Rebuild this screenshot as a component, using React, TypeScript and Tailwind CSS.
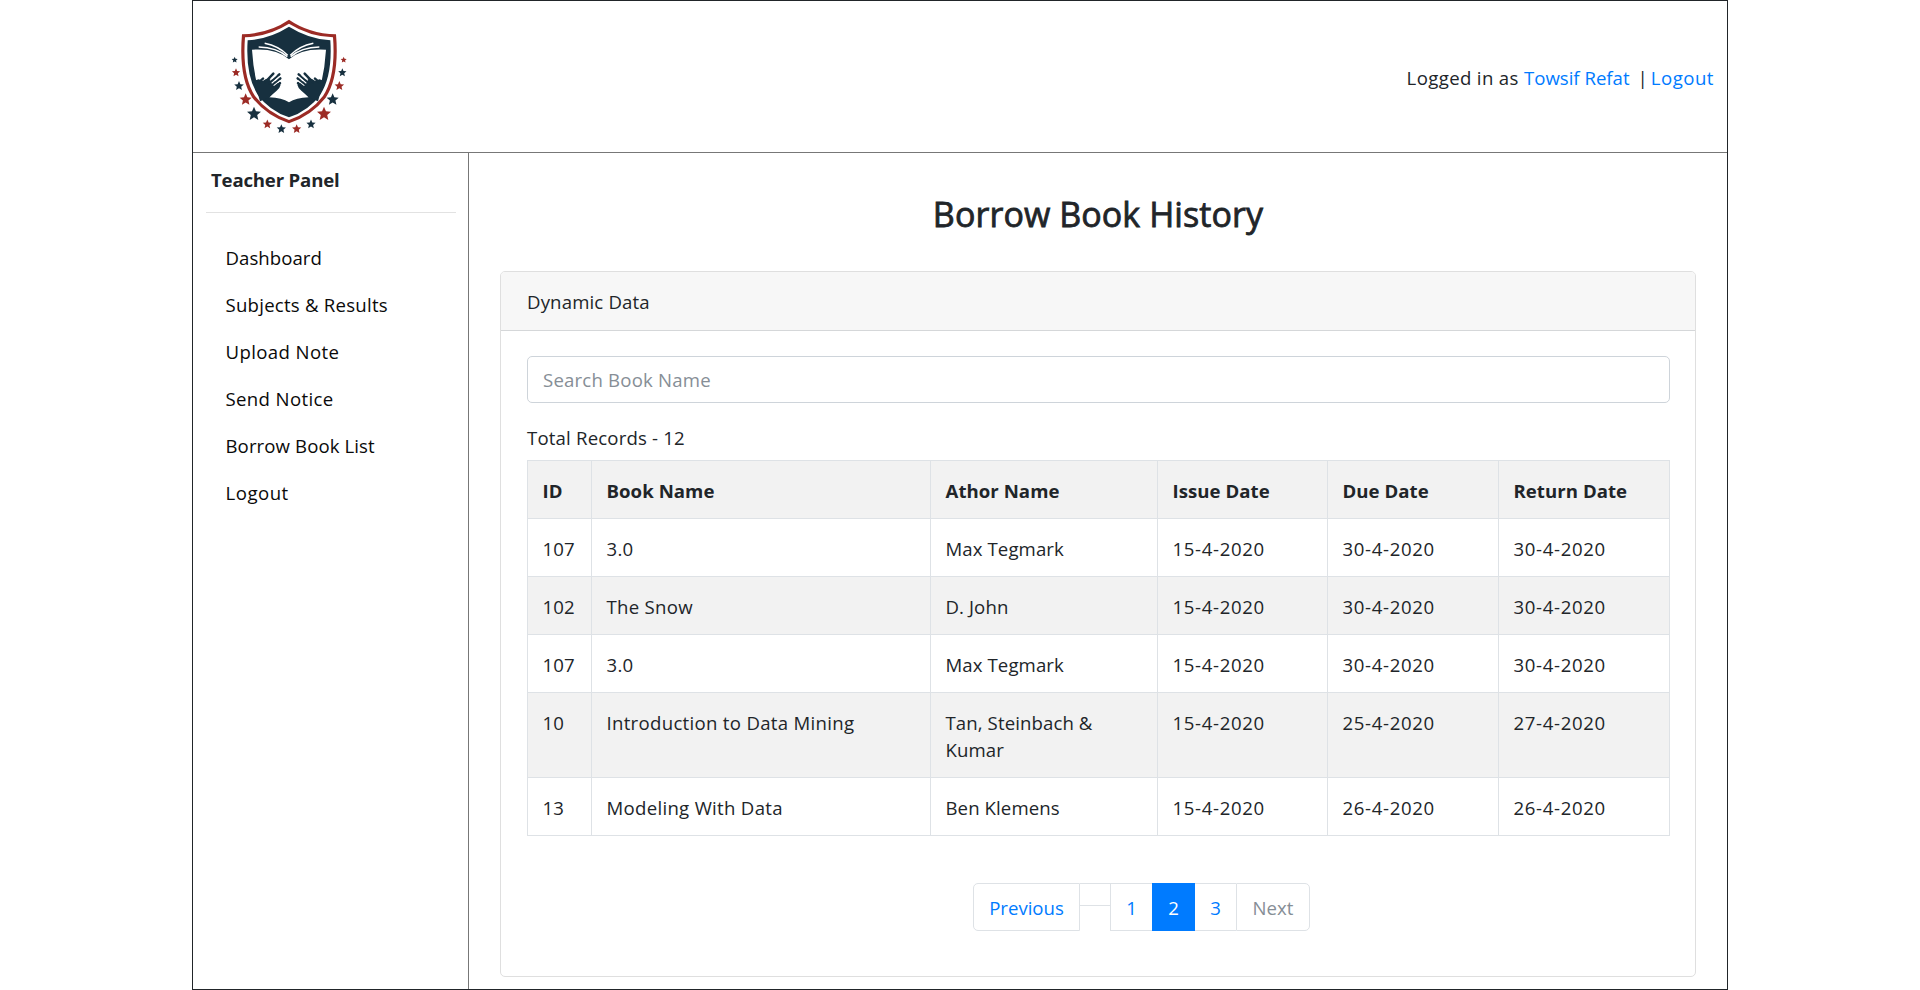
const NAVY = "#17303f";
const RED = "#9c2b25";

const menu: [string, string][] = [
  ["Dashboard", "tracking-[0.05px]"],
  ["Subjects & Results", "tracking-[0.24px]"],
  ["Upload Note", "tracking-[0.38px]"],
  ["Send Notice", "tracking-[0.36px]"],
  ["Borrow Book List", "tracking-[0.1px]"],
  ["Logout", "tracking-[0.5px]"],
];

const headings = ["ID", "Book Name", "Athor Name", "Issue Date", "Due Date", "Return Date"];

const rows = [
  ["107", "3.0", "Max Tegmark", "15-4-2020", "30-4-2020", "30-4-2020"],
  ["102", "The Snow", "D. John", "15-4-2020", "30-4-2020", "30-4-2020"],
  ["107", "3.0", "Max Tegmark", "15-4-2020", "30-4-2020", "30-4-2020"],
  ["10", "Introduction to Data Mining", "Tan, Steinbach & Kumar", "15-4-2020", "25-4-2020", "27-4-2020"],
  ["13", "Modeling With Data", "Ben Klemens", "15-4-2020", "26-4-2020", "26-4-2020"],
];

const cellTracking = [
  "tracking-[0.1px]",
  "tracking-[0.3px]",
  "tracking-[0.1px]",
  "tracking-[0.66px]",
  "tracking-[0.66px]",
  "tracking-[0.66px]",
];

// Centre x, centre y, radius, colour
const stars: [number, number, number, string][] = [
  [164, 180, 9.5, NAVY],
  [168, 218, 13, RED],
  [177, 258, 15, NAVY],
  [197, 299, 19, RED],
  [222, 342, 22, NAVY],
  [262, 373, 14.5, RED],
  [304, 387, 14.5, NAVY],
  [350, 387, 14.5, RED],
  [393, 373, 14.5, NAVY],
  [432, 342, 22, RED],
  [458, 299, 19, NAVY],
  [478, 258, 15, RED],
  [487, 218, 13, NAVY],
  [491, 180, 9.5, RED],
];

function starPoints(cx: number, cy: number, r: number) {
  return Array.from({ length: 10 }, (_, i) => {
    const radius = i % 2 ? r * 0.46 : r;
    const angle = (Math.PI / 5) * i - Math.PI / 2;
    return `${(cx + radius * Math.cos(angle)).toFixed(1)},${(cy + radius * Math.sin(angle)).toFixed(1)}`;
  }).join(" ");
}

function Hand() {
  return (
    <g>
      <path d="M222 242 L236 238 L248 243 Q262 233 275 237 L302 254 Q300 264 290 272 Q278 282 267 293 L240 304 Z" fill={NAVY} />
      <g stroke={NAVY} strokeWidth="7.5" strokeLinecap="round">
        <path d="M236 247 L249 236" />
        <path d="M256 246 L280 221" />
        <path d="M268 250 L298 223" />
        <path d="M278 256 L301 235" />
        <path d="M284 264 L300 249" />
      </g>
      <g stroke="#fff" strokeWidth="3.2" strokeLinecap="round">
        <path d="M271 240 L288 226" />
        <path d="M276 249 L298 230" />
        <path d="M282 256 L300 242" />
      </g>
    </g>
  );
}

function Logo() {
  return (
    <svg className="h-[120px] w-[120px]" viewBox="144 51 360 360" fill="none">
      <path
        d="M327 59 Q386 100 468 103 Q479 230 437 293 Q396 346 327 370 Q258 346 217 293 Q175 230 186 103 Q268 100 327 59 Z"
        fill={RED}
      />
      <path
        d="M327 71 Q388 109 459 112 Q468 228 429 288 Q391 338 327 360 Q263 338 225 288 Q186 228 195 112 Q266 109 327 71 Z"
        fill="#fff"
      />
      <path
        d="M327 80 Q386 117 451 121 Q458 226 421 284 Q386 332 327 352 Q268 332 233 284 Q196 226 203 121 Q268 117 327 80 Z"
        fill={NAVY}
      />
      <path
        d="M216 149 Q290 144 327 178 Q364 144 438 149 Q435 200 424 248 L372 258 Q374 276 386 292 Q348 293 327 307 Q306 293 268 292 Q280 276 282 258 L230 248 Q219 200 216 149 Z"
        fill="#fff"
      />
      <g stroke="#fff" strokeLinecap="butt">
        <path d="M236 141 Q290 142 322 170" strokeWidth="5" />
        <path d="M254 130 Q296 138 323 166" strokeWidth="4.5" />
        <path d="M418 141 Q364 142 332 170" strokeWidth="5" />
        <path d="M400 130 Q358 138 331 166" strokeWidth="4.5" />
      </g>
      <Hand />
      <g transform="translate(654 0) scale(-1 1)">
        <Hand />
      </g>
      {stars.map(([x, y, r, color]) => (
        <polygon key={`${x}-${y}`} points={starPoints(x, y, r)} fill={color} />
      ))}
    </svg>
  );
}

export default function App() {
  return (
    <div className="flex h-[990px] justify-center bg-white font-['Open_Sans','Noto_Sans',sans-serif] text-[18.6px] leading-[27px] text-[#212529]">
      <div className="flex w-[1536px] flex-col border border-[#212529]">
        <header className="flex h-[152px] shrink-0 items-center justify-between border-b border-[#777] pr-[13px] pl-[35px]">
          <Logo />
          <p className="flex pt-[2px]">
            <span className="tracking-[0.36px]">Logged in as&nbsp;</span>
            <a className="text-[#007bff]">Towsif Refat</a>
            <span className="pl-[8px]">|</span>
            <a className="pl-[3px] tracking-[0.5px] text-[#007bff]">Logout</a>
          </p>
        </header>

        <div className="flex min-h-0 flex-1">
          <aside className="w-[276px] shrink-0 border-r border-[#777] pt-[13px] pr-3 pl-[13px]">
            <p className="pl-[5px] font-bold tracking-[-0.18px]">Teacher Panel</p>
            <hr className="mt-[19px] border-[#e2e2e2]" />
            <nav className="flex flex-col gap-5 pt-[31px] pl-[19.5px] text-[#0a0a0a]">
              {menu.map(([label, tracking]) => (
                <a key={label} className={tracking}>
                  {label}
                </a>
              ))}
            </nav>
          </aside>

          <main className="flex flex-1 flex-col pt-[37px] pr-[32px] pb-[12px] pl-[31px]">
            <h1 className="text-center text-[34px] leading-[48px] tracking-[0.08px] [-webkit-text-stroke:0.8px_#212529]">
              Borrow Book History
            </h1>

            <section className="mt-[33px] flex flex-1 flex-col rounded-[5px] border border-[#dfdfdf]">
              <div className="h-[59px] rounded-t-[4px] border-b border-[#d5d7d9] bg-[#f7f7f7] px-[26px] pt-4 tracking-[0.15px]">
                Dynamic Data
              </div>

              <div className="pt-[25px] pr-[25px] pl-[26px]">
                <input
                  className="block h-[47px] w-full rounded-[5px] border border-[#ced4da] px-[15px] tracking-[0.2px] placeholder:text-[#868e96]"
                  placeholder="Search Book Name"
                />
                <p className="mt-[21px] tracking-[0.18px]">Total Records - 12</p>

                <table className="mt-[9px] w-full table-fixed border-separate border-spacing-0 border-t border-l border-[#dee2e6] text-left">
                  <colgroup>
                    <col className="w-[64px]" />
                    <col className="w-[339px]" />
                    <col className="w-[227px]" />
                    <col className="w-[170px]" />
                    <col className="w-[171px]" />
                    <col className="w-[171px]" />
                  </colgroup>
                  <thead>
                    <tr className="bg-[#f2f2f2]">
                      {headings.map((heading) => (
                        <th key={heading} className="border-r border-b border-[#dee2e6] pt-4 pr-2 pb-3.5 pl-[14.5px] font-bold tracking-[0.05px]">
                          {heading}
                        </th>
                      ))}
                    </tr>
                  </thead>
                  <tbody>
                    {rows.map((row, index) => (
                      <tr key={index} className="even:bg-[#f2f2f2]">
                        {row.map((cell, column) => (
                          <td
                            key={column}
                            className={`border-r border-b border-[#dee2e6] pt-4 pr-2 pb-3.5 pl-[14.5px] align-top ${cellTracking[column]}`}
                          >
                            {cell}
                          </td>
                        ))}
                      </tr>
                    ))}
                  </tbody>
                </table>

                <ul className="mt-[47px] ml-[446px] flex items-start text-[#007bff]">
                  <li className="h-12 w-[107px] rounded-l-[5px] border border-[#dee2e6] pt-[10px] text-center">Previous</li>
                  <li className="h-[23px] w-[30px] border-y border-[#dee2e6]" />
                  <li className="h-12 w-[42px] border border-r-0 border-[#dee2e6] pt-[10px] text-center">1</li>
                  <li className="h-12 w-[43px] bg-[#007bff] pt-[11px] text-center text-white">2</li>
                  <li className="h-12 w-[41px] border-y border-[#dee2e6] pt-[10px] text-center">3</li>
                  <li className="h-12 w-[74px] rounded-r-[5px] border border-[#dee2e6] pt-[10px] text-center text-[#868e96]">Next</li>
                </ul>
              </div>
            </section>
          </main>
        </div>
      </div>
    </div>
  );
}
